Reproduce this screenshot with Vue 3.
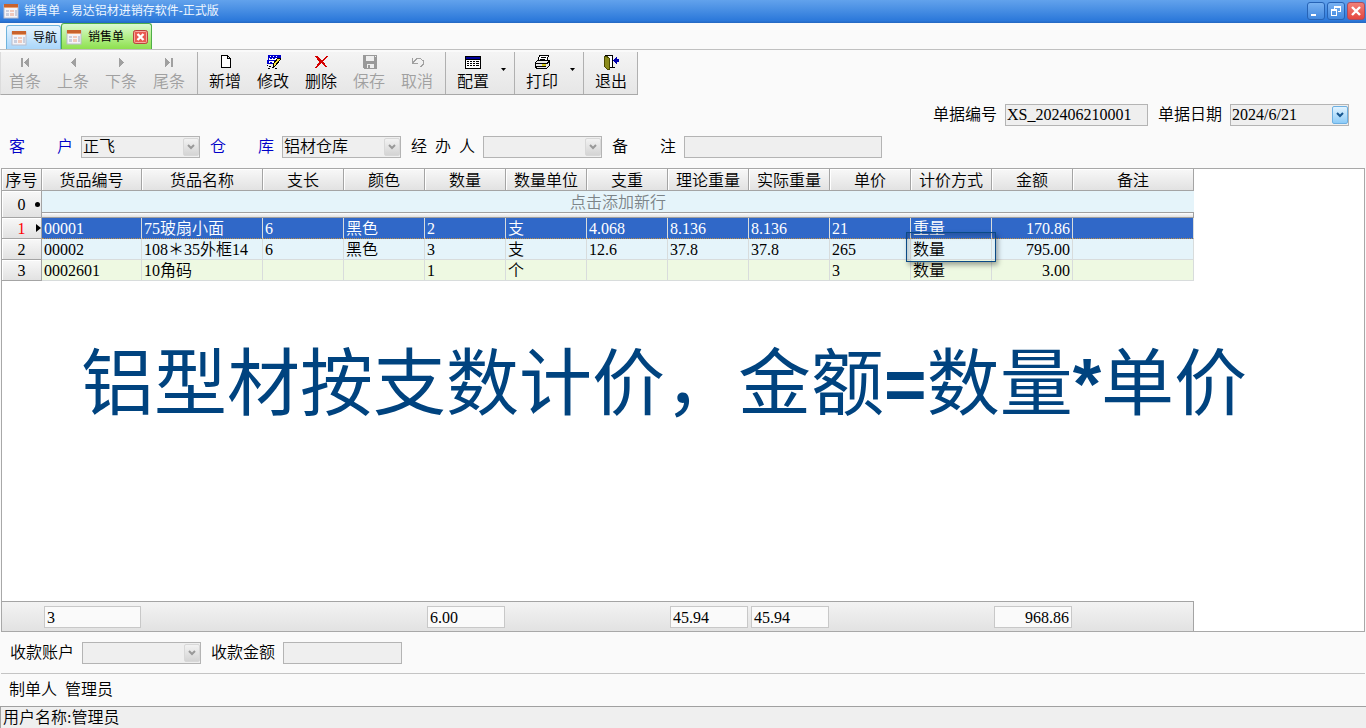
<template>
  <div class="window">

    <header class="titlebar">
      <svg class="form-icon" viewBox="0 0 16 16" aria-hidden="true">
        <rect x="1" y="2" width="14" height="13" fill="#f4f4f8" stroke="#b9bccb" />
        <rect x="1" y="1" width="14" height="4" fill="#c8622c" />
        <rect x="1" y="4" width="14" height="1" fill="#e9a274" />
        <path d="M3 7h3v2H3zM3 10h3v3H3zM12 7h2v6h-2z" fill="#c9cede" />
        <path d="M7 7h4v2H7zM7 10h4v3H7z" fill="#f0c9bc" />
      </svg>
      <h1 class="titlebar__text">销售单 - 易达铝材进销存软件-正式版</h1>
      <div class="titlebar__buttons">
        <button class="winbtn" aria-label="最小化">
          <svg viewBox="0 0 16 16"><path d="M3 11h5v2H3z" fill="#fff" /></svg>
        </button>
        <button class="winbtn" aria-label="还原">
          <svg viewBox="0 0 16 16" shape-rendering="crispEdges">
            <path d="M6 3h7v6h-3V8h2V5H7v1H6z" fill="#fff" />
            <path d="M3 6h6v7H3zM4 8v4h4V8z" fill="#fff" fill-rule="evenodd" />
          </svg>
        </button>
        <button class="winbtn winbtn--close" aria-label="关闭">
          <svg viewBox="0 0 16 16"><path d="M4 4l8 8M12 4l-8 8" stroke="#fff" stroke-width="2.4" /></svg>
        </button>
      </div>
    </header>

    <nav class="tabs">
      <button v-for="tab in tabs" :key="tab.text" class="tab" :class="{ 'tab--active': tab.active }">
        <svg class="form-icon" viewBox="0 0 16 16" aria-hidden="true">
          <rect x="1" y="2" width="14" height="13" fill="#f4f4f8" stroke="#b9bccb" />
          <rect x="1" y="1" width="14" height="4" fill="#c8622c" />
          <rect x="1" y="4" width="14" height="1" fill="#e9a274" />
          <path d="M3 7h3v2H3zM3 10h3v3H3zM12 7h2v6h-2z" fill="#c9cede" />
          <path d="M7 7h4v2H7zM7 10h4v3H7z" fill="#f0c9bc" />
        </svg>
        <span>{{ tab.text }}</span>
        <svg v-if="tab.active" class="tab__close" viewBox="0 0 15 14">
          <rect x=".5" y=".5" width="14" height="13" rx="2" fill="#e8594f" stroke="#b8433c" />
          <rect x="1.5" y="1.5" width="12" height="11" rx="1" fill="none" stroke="#f7a9a0" />
          <path d="M4.500 4l6 6M10.500 4l-6 6" stroke="#fff" stroke-width="2.400" />
        </svg>
      </button>
    </nav>

    <!-- TOOLBAR -->
    <div class="toolbar">
      <div v-for="(group, i) in toolbar" :key="i" class="toolbar__group">
        <button v-for="b in group" :key="b.text" class="tool" :disabled="b.disabled">
          <span class="tool__main">
            <svg viewBox="0 0 16 16" shape-rendering="crispEdges">
              <g v-if="b.icon === 'first'" fill="#a0a0a0"><path d="M4 4h2v9H4zM12 4v9L7 8.500z" /></g>
              <path v-else-if="b.icon === 'prev'" d="M11 4v9L6 8.500z" fill="#a0a0a0" />
              <path v-else-if="b.icon === 'next'" d="M6 4v9l5-4.500z" fill="#a0a0a0" />
              <g v-else-if="b.icon === 'last'" fill="#a0a0a0"><path d="M4 4v9l5-4.500zM10 4h2v9h-2z" /></g>
              <path v-else-if="b.icon === 'new'" d="M4.500 1.500h6l3 3v9h-9zM10.500 1.500v3h3" fill="#fff" stroke="#000" />
              <g v-else-if="b.icon === 'edit'">
                <path d="M3 1h13v3H3z" fill="#00c" />
                <path d="M3 4h12v6H2V6h1z" fill="#fff" />
                <path d="M3 4h1v6H2V6h1zM15 3h1v3h-1zM4 6h8v1H4zM4 9h6v1H4z" fill="#00c" />
                <path d="M5 2h1v1H5zM8 2h1v1H8zM11 2h1v1h-1z" fill="#fff" />
                <path d="M5 4h2v1H5zM8 4h2v1H8zM5 8h2v1H5z" fill="#00c" />
                <path d="M13 4h2v2l-5 6H8v-2z" fill="#ffe23c" stroke="#000" />
                <path d="M2 11h1v1H2zM4 12h2v1H4zM3 14h2v1H3zM7 13h2v1H7zM10 14h2v1h-2z" fill="#000" />
              </g>
              <path v-else-if="b.icon === 'delete'" d="M2 2h2l5 4 4-4h2l-5 5 4 6h-1L8 9l-4 5H2l4-6z" fill="#d40000" />
              <g v-else-if="b.icon === 'save'">
                <path d="M2 1h14v14H3l-1-1z" fill="#999" />
                <path d="M5 2h8v5H5zM6 10h7v4H6z" fill="#eee" />
                <path d="M7 11h2v3H7z" fill="#999" />
                <path d="M14 2h1v1h-1z" fill="#eee" />
              </g>
              <path v-else-if="b.icon === 'undo'" d="M3.500 4v5h5M4 8.500L7 5.500l1-1h3l3 2v4l-2 2h-1" fill="none" stroke="#a0a0a0" />
              <g v-else-if="b.icon === 'config'">
                <path d="M0 2h16v13H0z" fill="#000" />
                <path d="M1 3h14v2H1z" fill="#00009c" />
                <path d="M1 6h14v8H1z" fill="#fff" />
                <path d="M2 7h2v1H2zM5 7h2v1H5zM8 7h2v1H8zM11 7h3v1h-3zM2 9h2v1H2zM5 9h2v1H5zM8 9h2v1H8zM11 9h3v1h-3zM2 11h2v1H2zM5 11h2v1H5zM8 11h2v1H8zM11 11h3v1h-3z" fill="#000" />
              </g>
              <g v-else-if="b.icon === 'print'">
                <path d="M5.500 1.500h9l-2 6h-9z" fill="#fff" stroke="#000" />
                <path d="M7 3.500h5M6 5.500h5" stroke="#000" />
                <path d="M1.500 8.500l2-2h12v5l-3 3h-10l-1-2z" fill="#e8e8e8" stroke="#000" />
                <path d="M1 9.500h12M13 9.500l2-2M2 12.500h10" stroke="#000" />
                <path d="M8 10h4v2H8z" fill="#d8cc20" />
              </g>
              <g v-else>
                <path d="M2.500 1.500h7v12h-7z" fill="#fff" stroke="#000" />
                <path d="M1 2h2l3 2v11H4l-3-3z" fill="#8b8b1c" stroke="#4a4a00" />
                <path d="M10 6l4-4v3h2v3h-2v3z" fill="#0000b0" />
                <path d="M8 13.500h4" stroke="#000" />
              </g>
            </svg>
            <span>{{ b.text }}</span>
          </span>
          <svg v-if="b.menu" class="tool__arrow" viewBox="0 0 13 16"><path d="M4 3h5L6.500 6z" /></svg>
        </button>
      </div>
    </div>

    <!-- BILL HEADER -->
    <section class="form">
      <div class="form__row form__row--right">
        <div class="field">
          <label for="billNo">单据编号</label>
          <input id="billNo" v-model="bill.no" class="box box--no">
        </div>
        <div class="field">
          <label for="billDate">单据日期</label>
          <div class="combo">
            <input id="billDate" v-model="bill.date" class="box">
            <button class="combo__btn combo__btn--blue" aria-label="选择日期">
              <svg viewBox="0 0 8 6"><path d="M1 1l3 3 3-3" fill="none" stroke="#17568f" stroke-width="2" /></svg>
            </button>
          </div>
        </div>
      </div>
      <div class="form__row">
        <div v-for="f in selects" :key="f.id" class="field">
          <label :for="f.id" :class="{ required: f.required }">{{ f.label }}</label>
          <div class="combo">
            <select :id="f.id" class="box"><option>{{ f.value }}</option></select>
            <span class="combo__btn">
              <svg viewBox="0 0 8 6"><path d="M1 1l3 3 3-3" fill="none" stroke="#999" stroke-width="2" /></svg>
            </span>
          </div>
        </div>
        <div class="field">
          <label for="remark">备 注</label>
          <input id="remark" class="box box--remark">
        </div>
      </div>
    </section>

    <!-- DETAIL GRID -->
    <main class="grid">
      <table class="table">
        <colgroup>
          <col class="col-index">
          <col v-for="c in columns" :key="c.key" :class="`col-${c.size}`">
        </colgroup>
        <thead>
          <tr>
            <th>序号</th>
            <th v-for="c in columns" :key="c.key">{{ c.title }}</th>
          </tr>
        </thead>
        <tbody>
          <tr>
            <th rowspan="2" class="index">0<i class="mark-new"></i></th>
            <td :colspan="columns.length" class="add">点击添加新行</td>
          </tr>
          <tr class="splitter"><td :colspan="columns.length"></td></tr>
          <tr v-for="(row, i) in rows" :key="row.code" class="row" :class="{ 'row--current': i === 0 }">
            <th class="index">{{ i + 1 }}<i v-if="i === 0" class="mark-current"></i></th>
            <td v-for="c in columns" :key="c.key" :class="{ right: c.key === 'amount' }">
              {{ row[c.key] }}<span v-if="i === 1 && c.key === 'mode'" class="callout"></span>
            </td>
          </tr>
        </tbody>
      </table>

      <p class="slogan">铝型材按支数计价，金额<b>=</b>数量<b>*</b>单价</p>

      <table class="table summary">
        <colgroup>
          <col class="col-index">
          <col v-for="c in columns" :key="c.key" :class="`col-${c.size}`">
        </colgroup>
        <tbody>
          <tr>
            <td></td>
            <td v-for="c in columns" :key="c.key">
              <div v-if="totals[c.key]" class="total" :class="{ right: c.key === 'amount' }">{{ totals[c.key] }}</div>
            </td>
          </tr>
        </tbody>
      </table>
    </main>

    <section class="payment">
      <div class="field">
        <label for="account">收款账户</label>
        <div class="combo">
          <select id="account" class="box"><option></option></select>
          <span class="combo__btn">
            <svg viewBox="0 0 8 6"><path d="M1 1l3 3 3-3" fill="none" stroke="#999" stroke-width="2" /></svg>
          </span>
        </div>
      </div>
      <div class="field">
        <label for="received">收款金额</label>
        <input id="received" class="box">
      </div>
    </section>

    <div class="maker"><span>制单人</span><span>管理员</span></div>
    <footer class="status">用户名称:管理员</footer>

  </div>
</template>

<script setup>
import { reactive } from "vue"

const tabs = [
  { text: "导航", active: false },
  { text: "销售单", active: true }
]

const toolbar = [
  [
    { text: "首条", icon: "first", disabled: true },
    { text: "上条", icon: "prev", disabled: true },
    { text: "下条", icon: "next", disabled: true },
    { text: "尾条", icon: "last", disabled: true }
  ],
  [
    { text: "新增", icon: "new" },
    { text: "修改", icon: "edit" },
    { text: "删除", icon: "delete" },
    { text: "保存", icon: "save", disabled: true },
    { text: "取消", icon: "undo", disabled: true }
  ],
  [{ text: "配置", icon: "config", menu: true }],
  [{ text: "打印", icon: "print", menu: true }],
  [{ text: "退出", icon: "exit" }]
]

const bill = reactive({ no: "XS_202406210001", date: "2024/6/21" })

const selects = [
  { id: "customer", label: "客 户", value: "正飞", required: true },
  { id: "warehouse", label: "仓 库", value: "铝材仓库", required: true },
  { id: "handler", label: "经 办 人", value: "" }
]

const columns = [
  { key: "code", title: "货品编号", size: "code" },
  { key: "name", title: "货品名称", size: "wide" },
  { key: "length", title: "支长", size: "base" },
  { key: "color", title: "颜色", size: "base" },
  { key: "qty", title: "数量", size: "base" },
  { key: "unit", title: "数量单位", size: "base" },
  { key: "weight", title: "支重", size: "base" },
  { key: "theory", title: "理论重量", size: "base" },
  { key: "actual", title: "实际重量", size: "base" },
  { key: "price", title: "单价", size: "base" },
  { key: "mode", title: "计价方式", size: "base" },
  { key: "amount", title: "金额", size: "base" },
  { key: "remark", title: "备注", size: "wide" }
]

const rows = [
  { code: "00001", name: "75玻扇小面", length: "6", color: "黑色", qty: "2", unit: "支", weight: "4.068", theory: "8.136", actual: "8.136", price: "21", mode: "重量", amount: "170.86" },
  { code: "00002", name: "108＊35外框14", length: "6", color: "黑色", qty: "3", unit: "支", weight: "12.6", theory: "37.8", actual: "37.8", price: "265", mode: "数量", amount: "795.00" },
  { code: "0002601", name: "10角码", qty: "1", unit: "个", price: "3", mode: "数量", amount: "3.00" }
]

const totals = { code: "3", qty: "6.00", theory: "45.94", actual: "45.94", amount: "968.86" }
</script>

<style>
body {
  background: #fafafa;
}
</style>

<style scoped>
.window {
  display: flex;
  flex-direction: column;
  min-height: 100vh;
  background: #fafafa;
  color: #000;
  font: 350 16px/20px "Liberation Serif", "Noto Sans CJK SC", sans-serif;
}

.window * {
  box-sizing: border-box;
}

button,
input,
select {
  margin: 0;
  padding: 0;
  border: 0;
  background: none;
  color: inherit;
  font: inherit;
}

.form-icon {
  width: 16px;
  height: 16px;
  flex: none;
}

/* TITLE BAR */
.titlebar {
  display: flex;
  align-items: center;
  gap: 5px;
  height: 23px;
  padding: 0 1px 2px 3px;
  background: linear-gradient(#62a2ec, #4a90e4 40%, #2b78da 90%, #2467c0);
}

.titlebar__text {
  margin: 0;
  color: #eef6ff;
  font: 400 12px/18px "Liberation Sans", "Noto Sans CJK SC", sans-serif;
}

.titlebar__buttons {
  display: flex;
  gap: 2px;
  margin-left: auto;
}

.winbtn {
  width: 18px;
  height: 18px;
  border: 1px solid #2763b5;
  border-radius: 3px;
  background: linear-gradient(#79b2f2, #4288de);
}

.winbtn svg {
  display: block;
  width: 16px;
  height: 16px;
}

.winbtn--close {
  border-color: #a84c62;
  background: linear-gradient(#f08078, #e5473f);
}

/* TABS */
.tabs {
  display: flex;
  align-items: flex-end;
  height: 27px;
  padding-left: 6px;
  border-bottom: 1px solid #c0c0c0;
}

.tab {
  display: flex;
  align-items: center;
  gap: 6px;
  height: 24px;
  padding: 0 3px 0 4px;
  border: 1px solid #6fb3dc;
  border-bottom: 0;
  border-radius: 3px 3px 0 0;
  background: linear-gradient(#e6f4ff, #a9d6fa);
  font: 400 12px/20px "Liberation Sans", "Noto Sans CJK SC", sans-serif;
}

.tab--active {
  height: 26px;
  border-color: #4fae49;
  background: linear-gradient(#dcfad2, #b5ef8c 50%, #8de04e);
}

.tab__close {
  width: 15px;
  height: 14px;
  margin-left: 3px;
}

/* TOOLBAR */
.toolbar {
  display: flex;
  align-self: flex-start;
  height: 43px;
  margin-top: 2px;
  border-bottom: 1px solid #a8a8a8;
  border-left: 1px solid #dcdcdc;
  background: linear-gradient(#f4f4f4, #e6e6e6);
}

.toolbar__group {
  display: flex;
  padding: 0 4px 0 3px;
  border-right: 1px solid #b0b0b0;
}

.toolbar__group:first-child {
  padding-left: 0;
}

.toolbar__group:last-child {
  padding-right: 2px;
}

.tool {
  display: flex;
  align-items: center;
}

.tool__main {
  display: flex;
  flex-direction: column;
  align-items: center;
  gap: 2px;
  width: 48px;
}

.tool__main svg {
  width: 16px;
  height: 16px;
}

.tool:disabled {
  color: #a0a0a0;
}

.tool__arrow {
  width: 13px;
  height: 16px;
}

/* FORM */
.form {
  display: flex;
  flex-direction: column;
  gap: 10px;
  padding: 9px 17px 10px 9px;
}

.form__row {
  display: flex;
  gap: 10px;
}

.form__row--right {
  justify-content: flex-end;
}

.field {
  display: flex;
  align-items: center;
  gap: 8px;
}

.field label {
  width: 64px;
  text-align-last: justify;
  white-space: nowrap;
}

.required {
  color: #0000c8;
}

.box {
  display: block;
  width: 119px;
  height: 22px;
  padding: 0 1px;
  border: 1px solid #b4b4b4;
  border-radius: 0;
  background: #efefef;
  line-height: 20px;
  appearance: none;
}

.box--no {
  width: 143px;
}

.box--remark {
  width: 198px;
}

.combo {
  position: relative;
}

.combo__btn {
  position: absolute;
  top: 2px;
  right: 1px;
  display: flex;
  align-items: center;
  justify-content: center;
  width: 16px;
  height: 18px;
  border: 1px solid #d8d8d8;
  border-radius: 2px;
  background: linear-gradient(#f2f2f2, #d4d4d4);
  pointer-events: none;
}

.combo__btn--blue {
  border-color: #6db0e2;
  background: linear-gradient(#e2f3ff, #8ccbf8);
  pointer-events: auto;
}

.combo__btn svg {
  width: 8px;
  height: 6px;
}

/* GRID */
.grid {
  display: flex;
  flex: 1;
  flex-direction: column;
  margin: 0 1px;
  border: 1px solid #a8a8a8;
  background: #fff;
}

.table {
  width: 1192px;
  table-layout: fixed;
  border-spacing: 0;
}

.col-index {
  width: 40px;
}

.col-code {
  width: 100px;
}

.col-base {
  width: 81px;
}

.col-wide {
  width: 121px;
}

.table th,
.table td {
  height: 21px;
  padding: 2px 0 0;
  line-height: 18px;
  white-space: nowrap;
}

.table th {
  border-right: 1px solid #a4a4a4;
  border-bottom: 1px solid #a4a4a4;
  background: linear-gradient(#f8f8f8, #e2e2e2);
  box-shadow: inset 1px 1px #fff;
  font-weight: inherit;
}

.table thead th {
  height: 22px;
}

.index {
  position: relative;
}

.mark-new {
  position: absolute;
  top: 11px;
  right: 1px;
  width: 5px;
  height: 5px;
  border-radius: 50%;
  background: #000;
}

.mark-current {
  position: absolute;
  top: 6px;
  right: 0;
  border: solid transparent;
  border-width: 4px 0 4px 5px;
  border-left-color: #000;
}

.add {
  background: #e5f4fa;
  color: #7c8488;
  text-align: center;
}

.table .splitter td {
  height: 6px;
  padding: 0;
  border-top: 1px solid #a0a0a0;
  border-right: 1px solid #a0a0a0;
  border-bottom: 1px solid #a0a0a0;
  background: linear-gradient(#fff, #e0e0e0);
}

.row td {
  position: relative;
  border-right: 1px solid #d8dcdc;
  border-bottom: 1px solid #d8dcdc;
  background: #e5f4fa;
}

.table .row td {
  padding: 2px 2px 0;
}

.row:last-child td {
  background: #eef9e2;
}

.row--current td {
  border-bottom: 1px dotted #c09048;
  background: #3068c8;
  color: #fff;
}

.row--current .index {
  color: #f00;
}

.table .right {
  text-align: right;
}

.callout {
  position: absolute;
  z-index: 1;
  top: -7px;
  left: -5px;
  width: 90px;
  height: 30px;
  border: 1px solid #0b4a86;
  box-shadow: 2px 3px 5px rgba(0, 0, 0, 0.35), inset 2px 3px 5px rgba(0, 0, 0, 0.2);
}

.slogan {
  margin: 61px 0 0 79px;
  color: #00437f;
  font: 400 73px/84px "Liberation Sans", "Noto Sans CJK SC", sans-serif;
  white-space: nowrap;
}

.summary {
  margin-top: auto;
  border-top: 1px solid #a4a4a4;
  background: linear-gradient(#f3f3f3, #e2e2e2);
}

.table.summary td {
  height: 29px;
  padding: 1px 1px 0 2px;
}

.summary td:last-child {
  border-right: 1px solid #a4a4a4;
}

.total {
  height: 22px;
  padding: 2px 2px 0;
  border: 1px solid #c8c8c8;
  background: #fafafa;
}

/* FOOTER */
.payment {
  display: flex;
  gap: 10px;
  padding: 10px 9px 9px;
  margin: 0 1px;
  border-bottom: 1px solid #c4c4c4;
}

.maker {
  display: flex;
  gap: 8px;
  padding: 6px 9px;
}

.status {
  height: 22px;
  padding: 1px 0 0 2px;
  border-top: 1px solid #a0a0a0;
  border-left: 1px solid #a0a0a0;
  background: #efefef;
}
</style>
